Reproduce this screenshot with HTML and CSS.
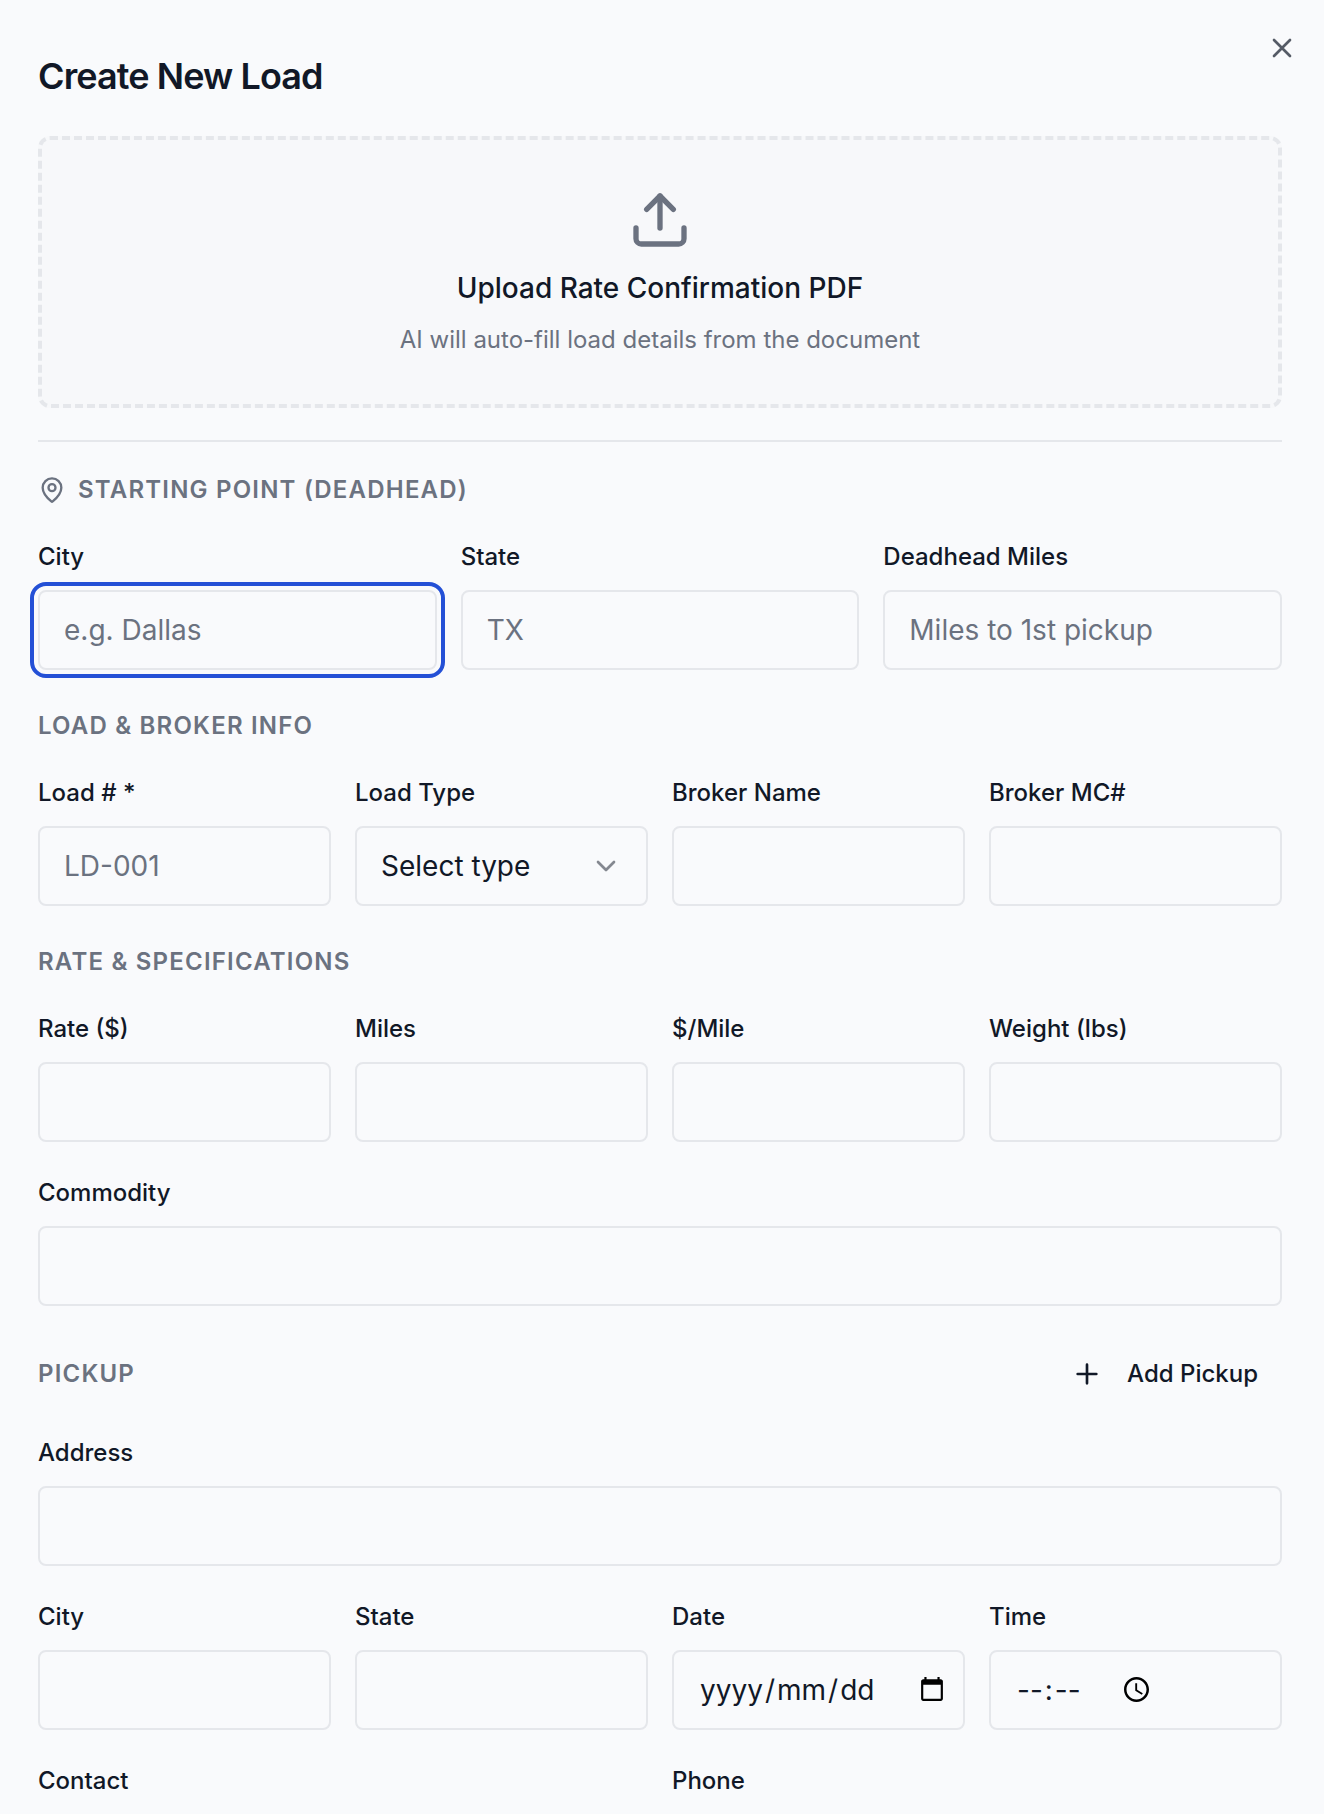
FILE: index.html
```html
<!DOCTYPE html>
<html lang="en">
  <head>
    <meta charset="UTF-8" />
    <title>Create New Load</title>
    <link rel="stylesheet" href="styles.css">
  </head>
  <body>
    <div class="dialog">
      <button class="close" type="button" aria-label="Close">
        <svg class="icon" viewBox="0 0 24 24"><path d="M18 6 6 18M6 6l12 12" /></svg>
      </button>

      <h2>Create New Load</h2>

      <div class="upload">
        <svg class="icon" viewBox="0 0 24 24">
          <path d="M21 15v4a2 2 0 0 1-2 2H5a2 2 0 0 1-2-2v-4" />
          <path d="m17 8-5-5-5 5" />
          <path d="M12 3v12" />
        </svg>
        <p class="upload-title">Upload Rate Confirmation PDF</p>
        <p class="upload-hint">AI will auto-fill load details from the document</p>
      </div>

      <form>
        <!-- Deadhead -->
        <h3 class="first">
          <svg class="icon" viewBox="0 0 24 24">
            <path d="M20 10c0 4.993-5.539 10.193-7.399 11.799a1 1 0 0 1-1.202 0C9.539 20.193 4 14.993 4 10a8 8 0 0 1 16 0" />
            <circle cx="12" cy="10" r="3" />
          </svg>
          <span>Starting Point (Deadhead)</span>
        </h3>
        <div class="row cols-3">
          <div class="field">
            <label for="start-city">City</label>
            <input class="focused" type="text" id="start-city" placeholder="e.g. Dallas" />
          </div>
          <div class="field">
            <label for="start-state">State</label>
            <input type="text" id="start-state" placeholder="TX" />
          </div>
          <div class="field">
            <label for="deadhead">Deadhead Miles</label>
            <input type="text" id="deadhead" placeholder="Miles to 1st pickup" />
          </div>
        </div>

        <!-- Load & broker -->
        <h3>Load &amp; Broker Info</h3>
        <div class="row cols-4">
          <div class="field">
            <label for="load-no">Load # *</label>
            <input type="text" id="load-no" placeholder="LD-001" />
          </div>
          <div class="field">
            <label>Load Type</label>
            <button class="control select" type="button">
              <span>Select type</span>
              <svg class="icon" viewBox="0 0 24 24"><path d="m6 9 6 6 6-6" /></svg>
            </button>
          </div>
          <div class="field">
            <label for="broker">Broker Name</label>
            <input type="text" id="broker" />
          </div>
          <div class="field">
            <label for="broker-mc">Broker MC#</label>
            <input type="text" id="broker-mc" />
          </div>
        </div>

        <!-- Rate -->
        <h3>Rate &amp; Specifications</h3>
        <div class="row cols-4">
          <div class="field">
            <label for="rate">Rate ($)</label>
            <input type="text" id="rate" />
          </div>
          <div class="field">
            <label for="miles">Miles</label>
            <input type="text" id="miles" />
          </div>
          <div class="field">
            <label for="per-mile">$/Mile</label>
            <input type="text" id="per-mile" />
          </div>
          <div class="field">
            <label for="weight">Weight (lbs)</label>
            <input type="text" id="weight" />
          </div>
        </div>
        <div class="row">
          <div class="field">
            <label for="commodity">Commodity</label>
            <input type="text" id="commodity" />
          </div>
        </div>

        <!-- Pickup -->
        <div class="section-bar">
          <h3>Pickup</h3>
          <button class="add" type="button">
            <svg class="icon" viewBox="0 0 24 24"><path d="M5 12h14M12 5v14" /></svg>
            <span>Add Pickup</span>
          </button>
        </div>
        <div class="row">
          <div class="field">
            <label for="address">Address</label>
            <input type="text" id="address" />
          </div>
        </div>
        <div class="row cols-4">
          <div class="field">
            <label for="city">City</label>
            <input type="text" id="city" />
          </div>
          <div class="field">
            <label for="state">State</label>
            <input type="text" id="state" />
          </div>
          <div class="field">
            <label>Date</label>
            <div class="control date">
              <span><span class="part">yyyy</span>/<span class="part">mm</span>/<span class="part">dd</span></span>
              <svg viewBox="2 1 20 22"><path d="M20 3h-1V1h-2v2H7V1H5v2H4c-1.1 0-2 .9-2 2v16c0 1.1.9 2 2 2h16c1.1 0 2-.9 2-2V5c0-1.1-.9-2-2-2zm0 18H4V8h16v13z" /></svg>
            </div>
          </div>
          <div class="field">
            <label>Time</label>
            <div class="control time">
              <span><span class="part">--</span>:<span class="part">--</span></span>
              <svg viewBox="2 2 20 20"><path d="M11.99 2C6.47 2 2 6.48 2 12s4.47 10 9.99 10C17.52 22 22 17.52 22 12S17.52 2 11.99 2zM12 20c-4.42 0-8-3.58-8-8s3.58-8 8-8 8 3.58 8 8-3.58 8-8 8zM12.5 7H11v6l5.25 3.15.75-1.23-4.5-2.67z" /></svg>
            </div>
          </div>
        </div>
        <div class="row cols-2">
          <div class="field">
            <label for="contact">Contact</label>
            <input type="text" id="contact" />
          </div>
          <div class="field">
            <label for="phone">Phone</label>
            <input type="text" id="phone" />
          </div>
        </div>
      </form>
    </div>
  </body>
</html>
```

FILE: styles.css
```css
* {
  box-sizing: border-box;
}
body {
  margin: 0;
  height: 1814px;
  overflow: hidden;
  background-color: #f9fafc;
  color: #111827;
  font-family: Inter, "Liberation Sans", sans-serif;
}
button,
input {
  font-family: inherit;
  color: inherit;
}
.dialog {
  position: relative;
  padding: 48px 42px 48px 38px;
}
.icon {
  flex: none;
  fill: none;
  stroke: currentColor;
  stroke-width: 2;
  stroke-linecap: round;
  stroke-linejoin: round;
}
.close {
  position: absolute;
  top: 32px;
  right: 26px;
  padding: 0;
  border: none;
  background: none;
  opacity: 0.7;
  cursor: pointer;
}
.close .icon {
  display: block;
  width: 32px;
  height: 32px;
}
h2 {
  margin: 0 0 32px;
  font-size: 36px;
  line-height: 56px;
  font-weight: 600;
  letter-spacing: -0.9px;
}

/* upload box */
.upload {
  display: flex;
  flex-direction: column;
  align-items: center;
  height: 272px;
  padding-top: 48px;
  border: 4px dashed #e5e7eb;
  border-radius: 12px;
  background-color: #f7f8fa;
}
.upload .icon {
  width: 64px;
  height: 64px;
  color: #6b7280;
}
.upload p {
  margin: 16px 0 0;
}
.upload-title {
  font-size: 28px;
  line-height: 40px;
  font-weight: 500;
}
.upload-hint {
  font-size: 24px;
  line-height: 32px;
  color: #6b7280;
}

/* form */
form {
  margin-top: 32px;
  border-top: 2px solid #e5e7eb;
}
h3 {
  display: flex;
  align-items: center;
  gap: 12px;
  margin: 40px 0 0;
  font-size: 24px;
  line-height: 32px;
  font-weight: 600;
  letter-spacing: 1.2px;
  text-transform: uppercase;
  color: #6b7280;
}
h3.first {
  margin-top: 32px;
}
h3 .icon {
  width: 28px;
  height: 28px;
}
.row {
  display: grid;
  gap: 24px;
  margin-top: 34px;
}
.cols-2 {
  grid-template-columns: repeat(2, 1fr);
}
.cols-3 {
  grid-template-columns: repeat(3, 1fr);
}
.cols-4 {
  grid-template-columns: repeat(4, 1fr);
}
.field {
  display: flex;
  flex-direction: column;
  gap: 16px;
  min-width: 0;
}
label {
  font-size: 24px;
  line-height: 34px;
  font-weight: 500;
}
input,
.control {
  width: 100%;
  height: 80px;
  padding: 0 24px;
  border: 2px solid #e5e7eb;
  border-radius: 8px;
  background-color: transparent;
  font-size: 28px;
}
input::placeholder {
  color: #6b7280;
  opacity: 1;
}
.focused {
  outline: 4px solid #2450d6;
  outline-offset: 4px;
}
.control {
  display: flex;
  align-items: center;
}
.select {
  justify-content: space-between;
}
.select .icon {
  width: 32px;
  height: 32px;
  opacity: 0.5;
}
.control svg:not(.icon) {
  margin-bottom: 2px;
  fill: #000;
}
.part {
  padding: 0 2px;
}
.date {
  justify-content: space-between;
  padding: 0 20px 0 24px;
}
.date svg {
  width: 22px;
  height: 24px;
}
.time {
  gap: 41px;
}
.time svg {
  width: 25px;
  height: 25px;
}

.section-bar {
  display: flex;
  align-items: center;
  justify-content: space-between;
  height: 56px;
  margin-top: 40px;
}
.section-bar h3 {
  margin: 0;
}
.add {
  display: flex;
  align-items: center;
  gap: 24px;
  height: 56px;
  padding: 0 24px;
  border: none;
  background: none;
  font-size: 24px;
  line-height: 32px;
  font-weight: 500;
  cursor: pointer;
}
.add .icon {
  width: 32px;
  height: 32px;
}
```
